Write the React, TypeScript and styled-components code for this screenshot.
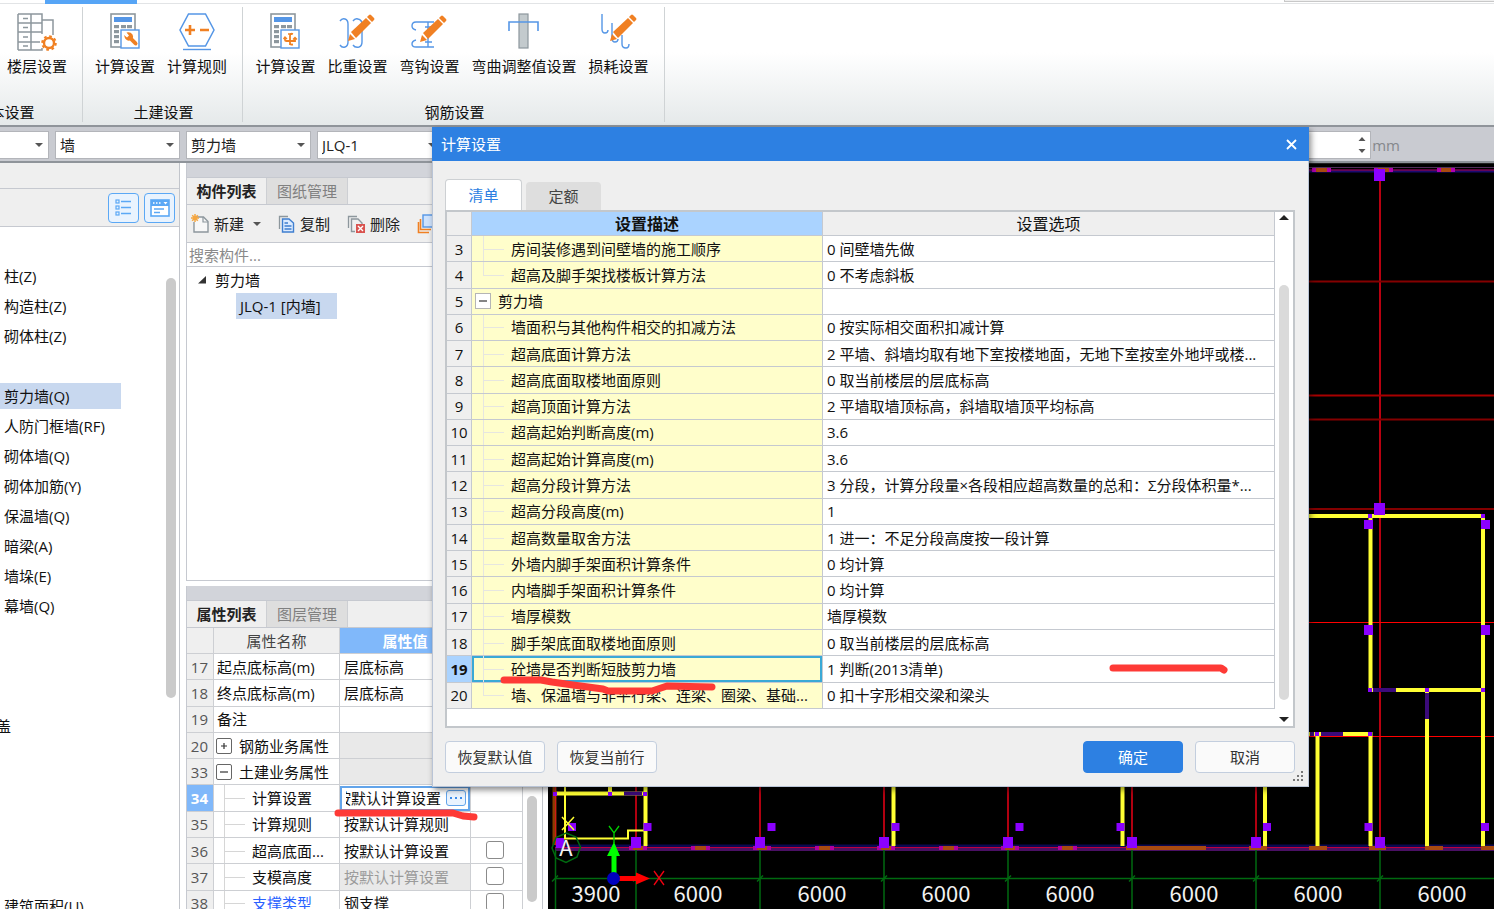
import React from "react";
import styled, { createGlobalStyle, css } from "styled-components";

const Global = createGlobalStyle`
  *, *::before, *::after { box-sizing: border-box; }
  html, body, #root { height: 100%; }
  body {
    margin: 0;
    overflow: hidden;
    color: #222;
    background: #fff;
    font: 15px/20px "Open Sans", "Noto Sans CJK SC", sans-serif;
  }
  button, input, select { font: inherit; color: inherit; margin: 0; }
  button { padding: 0; border: 0; background: none; white-space: nowrap; }
  ul { list-style: none; margin: 0; padding: 0; }
  svg { display: block; flex: none; }
`;

const Screen = styled.div`
  position: relative;
  display: flex;
  flex-direction: column;
  height: 100vh;
  overflow: hidden;
`;

/* ---------- ribbon ---------- */

const TabStrip = styled.div`
  display: flex;
  height: 4px;
  flex: none;
  padding-left: 45px;
  background: linear-gradient(#fff 3px, #e2e4e6 3px);
`;
const ActiveTabEdge = styled.div`
  width: 92px;
  background: #56a5f6;
`;
const SearchEdge = styled.div`
  width: 210px;
  height: 2px;
  margin-left: auto;
  background: #efefef;
  border-left: 1px solid #c8c8c8;
  border-bottom: 1px solid #c8c8c8;
`;
const Ribbon = styled.header`
  display: flex;
  height: 123px;
  flex: none;
  padding: 3px 0 3px;
  background: linear-gradient(#fff 40%, #e5e9ea);
  border-bottom: 2px solid #8f949a;
`;
const RibbonGroup = styled.section<{ $width: number; $cut?: boolean }>`
  display: flex;
  flex-direction: column;
  align-items: ${(p) => (p.$cut ? "flex-end" : "center")};
  flex: none;
  width: ${(p) => p.$width}px;
  margin-left: ${(p) => (p.$cut ? "-74px" : "0")};
  padding-right: ${(p) => (p.$cut ? "15px" : "0")};
  border-right: 1px solid #cfd3d5;
`;
const RibbonItems = styled.div`
  display: flex;
  gap: 12px;
  flex: 1;
  align-items: flex-start;
  padding-right: 3px;
  ${RibbonGroup}:first-child & { padding-right: 0; }
`;
const RibbonButton = styled.button`
  display: flex;
  flex-direction: column;
  align-items: center;
  gap: 4px;
  padding-top: 5px;
  color: #111;
`;
const GroupTitle = styled.div<{ $cut?: boolean }>`
  padding-left: 2px;
  color: #111;
  ${(p) => p.$cut && css`align-self: center; padding-left: 16px;`}
`;

/* ---------- selection bar ---------- */

const SelectBar = styled.div`
  display: flex;
  align-items: center;
  gap: 6px;
  height: 36px;
  flex: none;
  padding: 2px 94px 0 0;
  background: #c9cbd1;
  border-bottom: 2px solid #8f949a;
`;
const Combo = styled.label`
  position: relative;
  flex: none;
  width: 125px;
  &:first-child { margin-left: -76px; }
  &::after {
    content: "";
    position: absolute;
    right: 6px;
    top: 12px;
    border: 4px solid transparent;
    border-top-color: #555;
    border-bottom: 0;
  }
`;
const ComboSelect = styled.select`
  appearance: none;
  width: 100%;
  height: 28px;
  padding: 0 20px 0 4px;
  border: 1px solid #b3b5ba;
  border-radius: 0;
  background: #fff;
`;
const Spinner = styled.label`
  display: flex;
  align-items: center;
  margin-left: auto;
  color: #85888c;
`;
const SpinBox = styled.span`
  display: flex;
  align-items: center;
  height: 28px;
  margin-right: 1px;
  padding-right: 4px;
  border: 1px solid #b3b5ba;
  background: #fff;
`;
const SpinInput = styled.input`
  width: 108px;
  border: 0;
  background: transparent;
`;

/* ---------- workspace ---------- */

const Workspace = styled.main`
  display: flex;
  flex: 1;
  min-height: 0;
`;
const NavPane = styled.nav`
  display: flex;
  flex-direction: column;
  flex: none;
  width: 180px;
  border-right: 1px solid #c2c5cb;
  background: #fff;
`;
const NavHeading = styled.div`
  height: 26px;
  flex: none;
  background: #efefef;
  border-bottom: 1px solid #c6c9d0;
`;
const NavTools = styled.div`
  display: flex;
  justify-content: flex-end;
  align-items: center;
  gap: 5px;
  height: 38px;
  flex: none;
  padding-right: 4px;
  background: #efefef;
  border-bottom: 1px solid #c6c9d0;
`;
const ViewButton = styled.button`
  display: grid;
  place-items: center;
  width: 31px;
  height: 30px;
  border: 1px solid #5ba8f5;
  border-radius: 4px;
  background: #e9f3fe;
`;
const NavBody = styled.div`
  display: flex;
  flex: 1;
  min-height: 0;
  overflow: hidden;
`;
const NavList = styled.ul`
  flex: 1;
  padding-top: 34px;
`;
const NavItem = styled.li<{ $selected?: boolean; $cut?: boolean }>`
  height: 26px;
  width: 121px;
  margin: 2px 0 4px;
  padding: 3px 0 3px 4px;
  color: #111;
  white-space: nowrap;
  background: ${(p) => (p.$selected ? "#c8d8ef" : "transparent")};
  ${(p) => p.$cut && css`margin-left: -8px;`}
`;
const NavThumb = styled.div`
  width: 10px;
  height: 420px;
  margin: 51px 3px 0 0;
  border-radius: 5px;
  background: #cacaca;
`;

const SidePane = styled.aside`
  display: flex;
  flex-direction: column;
  gap: 5px;
  flex: none;
  width: 357px;
  margin: 0 5px 0 6px;
  border-right: 1px solid #c2c5cb;
`;
const Panel = styled.section<{ $grow?: boolean }>`
  display: flex;
  flex-direction: column;
  flex: none;
  min-height: 0;
  border-left: 1px solid #c6c9d0;
  border-bottom: 1px solid #c6c9d0;
  background: #fff;
  ${(p) => (p.$grow ? css`flex: 1; border-bottom: 0;` : css`height: 418px;`)}
`;
const PanelGrip = styled.div`
  height: 15px;
  flex: none;
  background: #d2d4da;
  border-bottom: 1px solid #c6c9d0;
`;
const PanelTabs = styled.div`
  display: flex;
  height: 27px;
  flex: none;
  background: #efefef;
  border-bottom: 1px solid #c6c9d0;
`;
const PanelTab = styled.button<{ $active?: boolean }>`
  width: ${(p) => (p.$active ? 80 : 81)}px;
  border-right: 1px solid #cdcfd3;
  background: ${(p) => (p.$active ? "#efefef" : "#dedede")};
  color: ${(p) => (p.$active ? "#222" : "#808080")};
  font-weight: ${(p) => (p.$active ? 700 : 400)};
`;
const PanelTools = styled.div`
  display: flex;
  align-items: center;
  gap: 17px;
  height: 38px;
  flex: none;
  padding-left: 4px;
  overflow: hidden;
  background: #efefef;
  border-bottom: 1px solid #c6c9d0;
`;
const ToolButton = styled.button`
  display: flex;
  align-items: center;
  gap: 5px;
`;
const Caret = styled.span`
  margin-left: 4px;
  border: 4px solid transparent;
  border-top-color: #555;
  border-bottom: 0;
`;
const SearchInput = styled.input`
  height: 24px;
  flex: none;
  padding: 0 2px;
  border: 0;
  border-bottom: 1px solid #c6c9d0;
  background: #fff;
  &::placeholder { color: #8a8a8a; opacity: 1; }
`;
const Tree = styled.ul`
  color: #111;
`;
const TreeBranch = styled.li`
  display: flex;
  align-items: center;
  gap: 8px;
  height: 26px;
  padding-left: 11px;
`;
const TreeLeaf = styled.li`
  width: 101px;
  height: 26px;
  margin-left: 49px;
  padding: 3px 4px;
  background: #c8d8ef;
  white-space: nowrap;
`;

/* ---------- property grid ---------- */

const PropertyBody = styled.div`
  display: flex;
  flex: 1;
  min-height: 0;
  overflow: hidden;
`;
const PropertyTable = styled.table`
  table-layout: fixed;
  flex: none;
  width: 336px;
  height: 289px;
  border-collapse: separate;
  border-spacing: 0;
  th, td {
    padding: 0 0 0 4px;
    border-right: 1px solid #cdcfd3;
    border-bottom: 1px solid #cdcfd3;
    text-align: left;
    font-weight: 400;
    white-space: nowrap;
    overflow: hidden;
    color: #111;
  }
  thead th {
    height: 26px;
    padding: 0;
    text-align: center;
    background: #efefef;
    color: #444;
  }
`;
const ValueHead = styled.th`
  && { background: #80b8fa; color: #fff; font-weight: 700; }
`;
const RowNumber = styled.th<{ $current?: boolean }>`
  && {
    padding: 0 5px 0 0;
    text-align: right;
    background: ${(p) => (p.$current ? "#80b8fa" : "#efefef")};
    color: ${(p) => (p.$current ? "#fff" : "#555")};
    font-weight: ${(p) => (p.$current ? 700 : 400)};
  }
`;
const PropertyName = styled.td<{ $linked?: boolean; $kind: string }>`
  && {
    padding-left: ${(p) => (p.$kind === "plain" ? 3 : 2)}px;
    ${(p) => p.$linked && css`color: #2a62ff;`}
  }
`;
const NameLine = styled.span`
  display: flex;
  align-items: center;
  gap: 7px;
  height: 25px;
`;
const Toggle = styled.button<{ $soft?: boolean }>`
  display: grid;
  place-items: center;
  width: 16px;
  height: 16px;
  flex: none;
  border: 1px solid ${(p) => (p.$soft ? "#b5b5b5" : "#666")};
  border-radius: ${(p) => (p.$soft ? 0 : 2)}px;
  background: #fff;
`;
const Twig = styled.span<{ $last?: boolean; $pale?: boolean }>`
  position: relative;
  align-self: stretch;
  width: 21px;
  margin-left: 8px;
  flex: none;
  &::before {
    content: "";
    position: absolute;
    left: 0;
    top: -1px;
    bottom: ${(p) => (p.$last ? "50%" : "-2px")};
    border-left: 1px solid ${(p) => (p.$pale ? "#e6e6e0" : "#d6d6d6")};
  }
  &::after {
    content: "";
    position: absolute;
    left: 0;
    right: 0;
    top: 50%;
    border-top: 1px solid ${(p) => (p.$pale ? "#e6e6e0" : "#d6d6d6")};
  }
`;
const PropertyValue = styled.td<{ $shade?: boolean; $muted?: boolean }>`
  && {
    background: ${(p) => (p.$shade ? "#e9e9e9" : "#fff")};
    ${(p) => p.$muted && css`color: #9b9b9b;`}
  }
`;
const EditingValue = styled.td`
  && { padding: 0; }
`;
const EditFrame = styled.span`
  display: flex;
  align-items: center;
  gap: 5px;
  height: 25px;
  padding: 0 2px 0 4px;
  border: 2px solid #62a4ea;
`;
const EditText = styled.span`
  display: flex;
  justify-content: flex-end;
  flex: 1;
  min-width: 0;
  overflow: hidden;
`;
const MoreButton = styled.button`
  display: grid;
  place-items: center;
  width: 20px;
  height: 16px;
  flex: none;
  border: 1px solid #62a4ea;
  border-radius: 3px;
  background: #e9f3fe;
`;
const CheckCell = styled.td`
  && { padding: 0; }
`;
const CheckBox = styled.input`
  appearance: none;
  display: block;
  width: 18px;
  height: 18px;
  margin: 0 0 2px 15px;
  border: 1px solid #8b8b8b;
  border-radius: 3px;
  background: #fff;
`;
const PropertyThumb = styled.div`
  width: 10px;
  height: 106px;
  margin: 168px 0 0 4px;
  border-radius: 5px;
  background: #cacaca;
`;

/* ---------- drawing canvas ---------- */

const Canvas = styled.div`
  flex: 1;
  min-width: 0;
  border-top: 1px solid #222;
  background: #000;
  svg { width: 100%; height: 100%; }
`;

/* ---------- dialog ---------- */

const Dialog = styled.section`
  position: absolute;
  left: 432px;
  top: 127px;
  width: 877px;
  border: 1px solid #b9c4d6;
  border-top: 0;
  background: #efefef;
  box-shadow: 2px 3px 6px rgba(0, 0, 0, 0.45);
`;
const TitleBar = styled.header`
  display: flex;
  align-items: center;
  justify-content: space-between;
  height: 34px;
  margin: 0 -1px;
  padding: 0 12px 0 9px;
  background: #2d80e2;
  color: #fff;
`;
const DialogBody = styled.div`
  padding: 18px 13px 13px 12px;
`;
const DialogTabs = styled.div`
  display: flex;
  align-items: flex-end;
  gap: 4px;
`;
const DialogTab = styled.button<{ $active?: boolean }>`
  width: ${(p) => (p.$active ? 77 : 75)}px;
  height: ${(p) => (p.$active ? 31 : 28)}px;
  border: ${(p) => (p.$active ? "1px solid #cdd0d3" : "0")};
  border-bottom: 0;
  border-radius: 4px 4px 0 0;
  background: ${(p) => (p.$active ? "#fff" : "#dedede")};
  color: ${(p) => (p.$active ? "#2d80e2" : "#444")};
`;
const TableFrame = styled.div`
  display: flex;
  height: 518px;
  border: 2px solid #c3c7cb;
  background: #fff;
`;
const SettingsTable = styled.table`
  table-layout: fixed;
  flex: 1;
  height: 497px;
  border-collapse: separate;
  border-spacing: 0;
  color: #111;
  th, td {
    padding: 0 4px;
    border-right: 1px solid #c5c9d0;
    border-bottom: 1px solid #c5c9d0;
    text-align: left;
    font-weight: 400;
    white-space: nowrap;
    overflow: hidden;
  }
  thead th {
    height: 24px;
    padding: 0;
    text-align: center;
    font-size: 16px;
    background: #efefef;
  }
`;
const DescHead = styled.th`
  && { background: #aad3ff; font-weight: 700; }
`;
const SettingNumber = styled.th<{ $current?: boolean }>`
  && {
    padding: 0;
    text-align: center;
    background: ${(p) => (p.$current ? "#aad3ff" : "#efefef")};
    font-weight: ${(p) => (p.$current ? 700 : 400)};
  }
`;
const SettingName = styled.td<{ $current?: boolean }>`
  && {
    padding: 0 0 0 3px;
    background: #fffecb;
    box-shadow: ${(p) => (p.$current ? "inset 0 0 0 2px #3aa9d6" : "none")};
  }
`;
const DialogScroll = styled.div`
  display: flex;
  flex-direction: column;
  align-items: center;
  justify-content: space-between;
  width: 18px;
  flex: none;
  padding: 3px 0 4px;
`;
const DialogThumb = styled.div`
  flex: 1;
  width: 10px;
  margin: 65px 0 17px;
  border-radius: 5px;
  background: #dadada;
`;
const ScrollArrow = styled.span<{ $down?: boolean }>`
  border: 5px solid transparent;
  ${(p) =>
    p.$down
      ? css`border-top-color: #222; border-bottom: 0;`
      : css`border-bottom-color: #222; border-top: 0;`}
`;
const DialogFooter = styled.footer`
  display: flex;
  gap: 12px;
  padding-top: 13px;
`;
const DialogButton = styled.button<{ $primary?: boolean }>`
  width: 100px;
  height: 32px;
  border: 1px solid ${(p) => (p.$primary ? "#2d80e2" : "#c3cede")};
  border-radius: 4px;
  background: ${(p) => (p.$primary ? "#2d80e2" : "#fafafa")};
  color: ${(p) => (p.$primary ? "#fff" : "#333")};
  &:nth-child(3) { margin-left: auto; }
`;
const ResizeGrip = styled.svg`
  position: absolute;
  right: 4px;
  bottom: 4px;
`;
const Markup = styled.svg`
  position: absolute;
  inset: 0;
  width: 100%;
  height: 100%;
  pointer-events: none;
`;

/* ---------- icons ---------- */

const BLUE = "#5596e6";
const ORANGE = "#f08023";
const GREY = "#8d979d";

const Pencil = ({ x = 0, y = 0 }: { x?: number; y?: number }) => (
  <g transform={`translate(${x} ${y})`} fill={ORANGE}>
    <path d="M0 27 L2 20 L7 25 Z" />
    <path d="M3 18 L18 4 L23 9 L8 24 Z" />
    <path d="M19 3 L21 1 Q22 0 23 1 L26 4 Q27 5 26 6 L24 8 Z" />
  </g>
);

const FloorIcon = () => (
  <svg width="42" height="40" viewBox="0 0 42 40" fill="none" stroke={GREY} strokeWidth="1.5">
    <path d="M2 2 H26 V22 M2 38 H26 V36 M2 2 V38 M15 2 V38 M2 11 H26 M2 20 H26 M2 30 H24 M26 8 H37 V23" />
    <path d="M7 6.500 H12 M7 15.500 H12 M7 25 H12 M7 34 H12" />
    <circle cx="33" cy="31" r="5" stroke={ORANGE} strokeWidth="2.400" fill="#fff" />
    <circle cx="33" cy="31" r="6.800" stroke={ORANGE} strokeWidth="2" strokeDasharray="2.670 2.670" />
  </svg>
);

const CalcBase = () => (
  <>
    <rect x="2" y="2" width="24" height="33" fill="#fff" stroke={GREY} strokeWidth="1.600" />
    <rect x="5" y="5" width="18" height="5" fill={BLUE} />
    <g fill={GREY}>
      {[13, 18, 23, 28].map((y) =>
        [5, 12, 18].map((x) => <rect key={`${x}-${y}`} x={x} y={y} width="5" height="3.200" />)
      )}
    </g>
    <rect x="12" y="18" width="18" height="18" fill="#fff" stroke={BLUE} strokeWidth="1.400" />
  </>
);

const CalcWrenchIcon = () => (
  <svg width="32" height="40" viewBox="0 0 32 40" fill="none">
    <CalcBase />
    <path
      d="M15 23 l3 2.500 l2 -2 l-2.500 -3 q4 -1 6 2 q1 2 .4 3.500 l4 4 q1.500 2 0 3 q-1.200 1.200 -3 -.4 l-4 -4 q-4.500 1 -5.900 -5.600Z"
      fill={ORANGE}
    />
  </svg>
);

const CalcBarIcon = () => (
  <svg width="32" height="40" viewBox="0 0 32 40" fill="none">
    <CalcBase />
    <g stroke={ORANGE} strokeWidth="1.800">
      <path d="M24 22 q-3 -1 -3 2 V33 M16 25 V28 Q16 29 17.500 29 H26 V26 M21 29 V31 Q21 33 24 32.500" />
      <path d="M19 22 h4 M14.500 27 l1.500 -2 l2 2 M24 27.500 l2 -2 l2 2" strokeWidth="1.300" />
    </g>
  </svg>
);

const RuleIcon = () => (
  <svg width="38" height="40" viewBox="0 0 38 40" fill="none">
    <path d="M10.500 2 H27.500 L36 18 L27.500 34 H10.500 L2 18 Z" fill="#fff" stroke={BLUE} strokeWidth="1.500" />
    <path d="M5 37.500 H33" stroke={BLUE} strokeWidth="1.400" />
    <path d="M7 18 H17 M12 13 V23 M22 18 H31" stroke={ORANGE} strokeWidth="2.600" />
  </svg>
);

const WeightIcon = () => (
  <svg width="38" height="40" viewBox="0 0 38 40" fill="none">
    <g stroke={BLUE} strokeWidth="1.400">
      <path d="M2 9 Q4 6 7 7 Q10 8 10 12 V30 Q10 34 7 35 Q4 36 2 33" />
      <path d="M15 9 Q17 6 20 7 Q24 8 24 12 V30 Q24 34 21 35 Q17 36 15 33" />
    </g>
    <Pencil x={10} y={2} />
  </svg>
);

const HookIcon = () => (
  <svg width="38" height="40" viewBox="0 0 38 40" fill="none">
    <g stroke={BLUE} strokeWidth="1.400">
      <path d="M6 18 Q2 17 2 14 Q2 10 6 10 H24 M6 28 Q2 29 2 32 Q2 35 6 35 H24 M18 10 V35 M15 30 H22 M15 15 H22" />
    </g>
    <Pencil x={10} y={3} />
  </svg>
);

const BendIcon = () => (
  <svg width="34" height="40" viewBox="0 0 34 40" fill="none">
    <rect x="12" y="2" width="9" height="34" fill="#c3cacd" stroke={GREY} strokeWidth="1.200" />
    <path d="M2 19 V10 H31 V19" stroke={BLUE} strokeWidth="1.600" />
  </svg>
);

const LossIcon = () => (
  <svg width="38" height="40" viewBox="0 0 38 40" fill="none">
    <path
      d="M2 2 V17 Q2 21 5 21 Q8 21 8 18 M12 11 V26 Q12 30 15 30 Q18 30 18 27 M22 23 V32 Q22 36 26 36 Q29 36 29 32"
      stroke={BLUE}
      strokeWidth="1.400"
    />
    <Pencil x={10} y={2} />
  </svg>
);

const ListViewIcon = () => (
  <svg width="18" height="18" viewBox="0 0 18 18" fill="none" stroke="#5ba8f5" strokeWidth="1.200">
    {[1, 7, 13].map((y) => (
      <g key={y}>
        <rect x="1" y={y} width="3" height="3" />
        <path d={`M6 ${y + 1.5} H16`} strokeWidth="1.500" />
      </g>
    ))}
  </svg>
);

const CardViewIcon = () => (
  <svg width="20" height="18" viewBox="0 0 20 18" fill="none">
    <rect x="1" y="1" width="18" height="16" fill="#fff" stroke="#5ba8f5" strokeWidth="1.600" />
    <rect x="1" y="1" width="18" height="6" fill="#5ba8f5" />
    <path d="M3 4 h1.500 M6 4 h1.500 M9 4 h1.500" stroke="#fff" strokeWidth="1.500" />
    <path d="M13.500 3 h4 l-2 2.500Z" fill="#fff" />
    <path d="M4 10 H14 M4 13.500 H10" stroke="#5ba8f5" strokeWidth="1.400" />
  </svg>
);

const NewIcon = () => (
  <svg width="18" height="19" viewBox="0 0 18 19" fill="none">
    <path d="M4 3 H12.500 L17 7.500 V18 H3 V8" fill="#f7f7f7" stroke={GREY} strokeWidth="1.400" />
    <path d="M12 3 V8 H17" stroke={GREY} strokeWidth="1.200" />
    <path d="M4 0 V8 M0 4 H8 M1.200 1.200 L6.800 6.800 M6.800 1.200 L1.200 6.800" stroke="#f5a640" strokeWidth="1.500" />
  </svg>
);

const CopyIcon = () => (
  <svg width="17" height="18" viewBox="0 0 17 18" fill="none">
    <path d="M1.500 14 V1.500 H10" stroke={GREY} strokeWidth="1.300" />
    <path d="M4.500 4 H11 L15.500 8 V17 H4.500 Z" fill="#dcebff" stroke="#3f7fd0" strokeWidth="1.400" />
    <path d="M6.500 8 H10 M6.500 11 H13.500 M6.500 14 H13.500" stroke="#3f7fd0" strokeWidth="1.300" />
  </svg>
);

const DeleteIcon = () => (
  <svg width="18" height="18" viewBox="0 0 18 18" fill="none">
    <path d="M1.500 13 V1.500 H10" stroke={GREY} strokeWidth="1.300" />
    <path d="M8 16.500 H4.500 V4 H11 L15 8 V9" stroke={GREY} strokeWidth="1.400" />
    <rect x="9" y="9" width="9" height="9" fill="#d9534f" />
    <path d="M11 11 L16 16 M16 11 L11 16" stroke="#fff" strokeWidth="1.400" />
  </svg>
);

const LayersIcon = () => (
  <svg width="20" height="20" viewBox="0 0 20 20" fill="none">
    <path d="M1.500 8 V18.500 H12" stroke={ORANGE} strokeWidth="1.600" />
    <path d="M3.500 5 V15.500 H14" stroke={ORANGE} strokeWidth="1.600" />
    <rect x="6" y="1" width="12" height="12" fill="#cfe3fd" stroke={BLUE} strokeWidth="1.400" />
  </svg>
);

/* ---------- data ---------- */

const NAV = [
  "柱(Z)", "构造柱(Z)", "砌体柱(Z)", "", "剪力墙(Q)", "人防门框墙(RF)", "砌体墙(Q)", "砌体加筋(Y)",
  "保温墙(Q)", "暗梁(A)", "墙垛(E)", "幕墙(Q)", "", "", "", "盖", "", "", "", "", "", "建筑面积(U)",
];

type Prop = {
  no: number;
  name: string;
  value?: string;
  kind: "plain" | "open" | "closed" | "child";
  check?: boolean;
  muted?: boolean;
  linked?: boolean;
  editing?: boolean;
};

const PROPS: Prop[] = [
  { no: 17, name: "起点底标高(m)", value: "层底标高", kind: "plain" },
  { no: 18, name: "终点底标高(m)", value: "层底标高", kind: "plain" },
  { no: 19, name: "备注", kind: "plain" },
  { no: 20, name: "钢筋业务属性", kind: "closed" },
  { no: 33, name: "土建业务属性", kind: "open" },
  { no: 34, name: "计算设置", value: "按默认计算设置", kind: "child", editing: true },
  { no: 35, name: "计算规则", value: "按默认计算规则", kind: "child" },
  { no: 36, name: "超高底面...", value: "按默认计算设置", kind: "child", check: true },
  { no: 37, name: "支模高度", value: "按默认计算设置", kind: "child", check: true, muted: true },
  { no: 38, name: "支撑类型", value: "钢支撑", kind: "child", check: true, linked: true },
];

const SETTINGS: [number, string, string][] = [
  [3, "房间装修遇到间壁墙的施工顺序", "0 间壁墙先做"],
  [4, "超高及脚手架找楼板计算方法", "0 不考虑斜板"],
  [5, "剪力墙", ""],
  [6, "墙面积与其他构件相交的扣减方法", "0 按实际相交面积扣减计算"],
  [7, "超高底面计算方法", "2 平墙、斜墙均取有地下室按楼地面，无地下室按室外地坪或楼..."],
  [8, "超高底面取楼地面原则", "0 取当前楼层的层底标高"],
  [9, "超高顶面计算方法", "2 平墙取墙顶标高，斜墙取墙顶平均标高"],
  [10, "超高起始判断高度(m)", "3.6"],
  [11, "超高起始计算高度(m)", "3.6"],
  [12, "超高分段计算方法", "3 分段，计算分段量×各段相应超高数量的总和：Σ分段体积量*..."],
  [13, "超高分段高度(m)", "1"],
  [14, "超高数量取舍方法", "1 进一：不足分段高度按一段计算"],
  [15, "外墙内脚手架面积计算条件", "0 均计算"],
  [16, "内墙脚手架面积计算条件", "0 均计算"],
  [17, "墙厚模数", "墙厚模数"],
  [18, "脚手架底面取楼地面原则", "0 取当前楼层的层底标高"],
  [19, "砼墙是否判断短肢剪力墙", "1 判断(2013清单)"],
  [20, "墙、保温墙与非平行梁、连梁、圈梁、基础...", "0 扣十字形相交梁和梁头"],
];

const AXES = [636, 760, 884, 1008, 1132, 1256, 1380];
const YELLOW = "#ffff33";
const PURPLE = "#8b00ff";
const DIM = "#3b0a7a";

const Plan = () => (
  <svg viewBox="548 164 946 745" preserveAspectRatio="xMinYMin slice" fill="none">
    {/* grid axes */}
    <g stroke="#b00010" strokeWidth="2">
      {AXES.slice(0, 6).map((x) => <path key={x} d={`M${x} 700 V846`} />)}
      <path d="M1380 168 V846" stroke="#b80010" />
      <path d="M1300 281.500 H1494 M1300 419.500 H1494 M1300 509 H1494" stroke="#840000" />
      <path d="M1300 395.500 H1494" stroke="#a80000" />
      <path d="M1300 622.500 H1494 M1300 736.500 H1494" stroke="#f00" strokeWidth="1" />
    </g>
    {/* outer walls */}
    <path d="M1300 167.500 H1494" stroke="#50305a" />
    <path d="M1300 171 H1494" stroke="#1a0a70" strokeWidth="3" />
    <path d="M1300 170 H1494" stroke="#b0003c" />
    <path d="M555 846 H1494" stroke="#0c0850" strokeWidth="3" />
    <path d="M555 849.500 H1494" stroke="#4a1064" strokeWidth="3" />
    <path d="M555 847.500 H1494" stroke="#c0003c" />
    {[[1312, 19], [1374, 19], [1437, 18]].map(([x, w]) => (
      <g key={x}>
        <rect x={x} y="168" width={w} height="4" fill="#b000b0" />
        <rect x={x + 4} y="168" width={w - 8} height="4" fill="#a84a10" />
      </g>
    ))}
    {[[629, 18], [691, 19], [753, 18], [815, 19], [877, 18], [939, 19], [1001, 18], [1058, 19]].map(([x, w]) => (
      <g key={x}>
        <rect x={x} y="846" width={w} height="4" fill="#b000a0" />
        <rect x={x + 4} y="846" width={w - 8} height="4" fill="#a84a10" />
      </g>
    ))}
    <path d="M1126 848 H1206 M1249 848 H1267 M1309 848 H1327 M1369 848 H1386 M1425 848 H1443 M1481 848 H1494" stroke="#a84a10" strokeWidth="4" />
    {/* partition walls */}
    <g stroke={YELLOW} strokeWidth="4">
      <path d="M1300 516 H1483 M1370.500 516 V690 M1483 516 V846 M1370.500 690 H1483 M1427 690 V846" />
      <path d="M1300 734 H1370.500 V846 M1317.500 734 V846 M1265 700 V846 M1122.500 700 V846 M893.500 700 V846 M645.500 700 V846" />
      <path d="M556 793.500 H645 M610 780 V794" />
      <path d="M565 780 V838.500 H628 V830.500 H644" strokeWidth="2" />
    </g>
    <g stroke={DIM} strokeWidth="4">
      <path d="M1373 690 H1396 M1427 693 V719 M1310 734 H1314 M1321 734 H1343 M624 793.500 H642" />
    </g>
    <path d="M554.500 780 V845" stroke="#8a3c00" strokeWidth="4" />
    <path d="M555.500 780 V845" stroke="#d01818" />
    {/* columns */}
    <g fill={PURPLE}>
      {AXES.map((x) => <rect key={x} x={x - 5} y="837" width="10" height="11" />)}
      <rect x="556" y="838" width="8" height="10" />
      {[572, 647.5, 771.5, 895.5, 1019.5, 1120.5, 1267, 1368.5, 1485].map((x) => (
        <rect key={x} x={x - 4} y="823" width="8" height="8" />
      ))}
      <rect x="1374" y="169" width="11" height="12" />
      <rect x="1374" y="503" width="11" height="12" />
      {[1364, 1481].map((x) => (
        <g key={x}>
          <rect x={x} y="520" width="9" height="9" />
          <rect x={x} y="625" width="9" height="10" />
        </g>
      ))}
      {[[1368, 514], [1481, 514], [1368, 688], [1425, 688], [1481, 688], [1315, 732], [1368, 732], [553, 792], [608, 792], [643, 792]].map(([x, y]) => (
        <rect key={`${x}-${y}`} x={x} y={y} width="4" height="4" />
      ))}
    </g>
    {/* dimension lines */}
    <g stroke="#006a10" strokeWidth="1.500">
      <path d="M555 878.500 H1494 M555.500 850 V909" />
      {AXES.map((x) => <path key={x} d={`M${x} 850 V909`} />)}
      {[555, ...AXES].map((x) => <path key={x} d={`M${x - 3} 881.500 L${x + 3} 875.500`} />)}
      <path d="M566 833 L576 837 L580.500 847 L577 857 L566 862.500 L556 858 L552 848 L556 837.500 Z" />
    </g>
    <g fill="#f2f2f2" fontFamily='"Noto Sans CJK SC", sans-serif' fontSize="22" textAnchor="middle">
      <text x="596" y="902">3900</text>
      {[698, 822, 946, 1070, 1194, 1318, 1442].map((x) => <text key={x} x={x} y="902">6000</text>)}
      <text x="566" y="856">A</text>
    </g>
    {/* coordinate marker */}
    <path d="M562 817 L574 830 M574 817 L562 830" stroke={YELLOW} strokeWidth="1.500" />
    <path d="M609 826 L614 833 L619 826 M614 833 V843" stroke="#00d000" strokeWidth="1.300" />
    <path d="M614 842 L620 856 H616.500 V873 H611.500 V856 H607 Z" fill="#0f0" />
    <path d="M650 878.500 L636 872.500 V876 H619 V881 H636 V884.500 Z" fill="#f00" />
    <circle cx="613.500" cy="878.500" r="6.500" fill="#0000c0" />
    <path d="M654 871 L664 885 M664 871 L654 885" stroke="#f00010" strokeWidth="1.300" />
  </svg>
);

const RIBBON_REBAR: [string, React.ReactNode][] = [
  ["计算设置", <CalcBarIcon key="i" />],
  ["比重设置", <WeightIcon key="i" />],
  ["弯钩设置", <HookIcon key="i" />],
  ["弯曲调整值设置", <BendIcon key="i" />],
  ["损耗设置", <LossIcon key="i" />],
];

const ToggleSign = ({ open }: { open: boolean }) => (
  <svg width="10" height="10" viewBox="0 0 10 10" stroke="#333" strokeWidth="1.200">
    <path d={open ? "M1 5 H9" : "M2 5 H8 M5 2 V8"} />
  </svg>
);

const PropertyRow = ({ row }: { row: Prop }) => {
  const group = row.kind === "open" || row.kind === "closed";
  return (
    <tr>
      <RowNumber scope="row" $current={row.editing}>{row.no}</RowNumber>
      <PropertyName $kind={row.kind} $linked={row.linked}>
        <NameLine>
          {group && (
            <Toggle aria-label={row.name}>
              <ToggleSign open={row.kind === "open"} />
            </Toggle>
          )}
          {row.kind === "child" && <Twig />}
          {row.name}
        </NameLine>
      </PropertyName>
      {row.editing ? (
        <EditingValue>
          <EditFrame>
            <EditText><span>{row.value}</span></EditText>
            <MoreButton aria-label="更多">
              <svg width="12" height="4" viewBox="0 0 12 4" fill="#3a8ae8">
                <rect x="0" y="1" width="2" height="2" />
                <rect x="5" y="1" width="2" height="2" />
                <rect x="10" y="1" width="2" height="2" />
              </svg>
            </MoreButton>
          </EditFrame>
        </EditingValue>
      ) : (
        <PropertyValue $shade={group || row.muted} $muted={row.muted}>{row.value}</PropertyValue>
      )}
      <CheckCell>{row.check && <CheckBox type="checkbox" aria-label={row.name} />}</CheckCell>
    </tr>
  );
};

export default function App() {
  return (
    <>
      <Global />
      <Screen>
        <TabStrip><ActiveTabEdge /><SearchEdge /></TabStrip>
        <Ribbon>
          <RibbonGroup $width={157} $cut>
            <RibbonItems>
              <RibbonButton><FloorIcon />楼层设置</RibbonButton>
            </RibbonItems>
            <GroupTitle $cut>基本设置</GroupTitle>
          </RibbonGroup>
          <RibbonGroup $width={160}>
            <RibbonItems>
              <RibbonButton><CalcWrenchIcon />计算设置</RibbonButton>
              <RibbonButton><RuleIcon />计算规则</RibbonButton>
            </RibbonItems>
            <GroupTitle>土建设置</GroupTitle>
          </RibbonGroup>
          <RibbonGroup $width={422}>
            <RibbonItems>
              {RIBBON_REBAR.map(([label, icon]) => (
                <RibbonButton key={label}>{icon}{label}</RibbonButton>
              ))}
            </RibbonItems>
            <GroupTitle>钢筋设置</GroupTitle>
          </RibbonGroup>
        </Ribbon>

        <SelectBar>
          {["", "墙", "剪力墙", "JLQ-1"].map((v) => (
            <Combo key={v}>
              <ComboSelect aria-label={v || "楼层"}><option>{v}</option></ComboSelect>
            </Combo>
          ))}
          <Spinner>
            <SpinBox>
              <SpinInput aria-label="mm" />
              <svg width="8" height="16" viewBox="0 0 8 16" fill="#555">
                <path d="M0.500 4 L4 0 L7.500 4Z M0.500 12 L4 16 L7.500 12Z" />
              </svg>
            </SpinBox>
            mm
          </Spinner>
        </SelectBar>

        <Workspace>
          <NavPane>
            <NavHeading />
            <NavTools>
              <ViewButton aria-label="列表"><ListViewIcon /></ViewButton>
              <ViewButton aria-label="卡片"><CardViewIcon /></ViewButton>
            </NavTools>
            <NavBody>
              <NavList>
                {NAV.map((label, i) => (
                  <NavItem key={i} $selected={label === "剪力墙(Q)"} $cut={label === "盖"}>{label}</NavItem>
                ))}
              </NavList>
              <NavThumb />
            </NavBody>
          </NavPane>

          <SidePane>
            <Panel>
              <PanelGrip />
              <PanelTabs>
                <PanelTab $active>构件列表</PanelTab>
                <PanelTab>图纸管理</PanelTab>
              </PanelTabs>
              <PanelTools>
                <ToolButton><NewIcon />新建<Caret /></ToolButton>
                <ToolButton><CopyIcon />复制</ToolButton>
                <ToolButton><DeleteIcon />删除</ToolButton>
                <ToolButton aria-label="层间复制"><LayersIcon /></ToolButton>
              </PanelTools>
              <SearchInput placeholder="搜索构件..." aria-label="搜索构件" />
              <Tree>
                <TreeBranch>
                  <svg width="9" height="8" viewBox="0 0 9 8"><path d="M8 0 V7.500 H0 Z" fill="#333" /></svg>
                  剪力墙
                </TreeBranch>
                <TreeLeaf>JLQ-1 [内墙]</TreeLeaf>
              </Tree>
            </Panel>

            <Panel $grow>
              <PanelGrip />
              <PanelTabs>
                <PanelTab $active>属性列表</PanelTab>
                <PanelTab>图层管理</PanelTab>
              </PanelTabs>
              <PropertyBody>
                <PropertyTable>
                  <colgroup>
                    <col width="27" /><col width="126" /><col width="131" /><col width="52" />
                  </colgroup>
                  <thead>
                    <tr>
                      <th />
                      <th>属性名称</th>
                      <ValueHead>属性值</ValueHead>
                      <th>附加</th>
                    </tr>
                  </thead>
                  <tbody>
                    {PROPS.map((row) => <PropertyRow key={row.no} row={row} />)}
                  </tbody>
                </PropertyTable>
                <PropertyThumb />
              </PropertyBody>
            </Panel>
          </SidePane>

          <Canvas><Plan /></Canvas>
        </Workspace>

        <Dialog role="dialog" aria-label="计算设置">
          <TitleBar>
            计算设置
            <button aria-label="关闭">
              <svg width="11" height="11" viewBox="0 0 11 11" stroke="#fff" strokeWidth="1.800">
                <path d="M1 1 L10 10 M10 1 L1 10" />
              </svg>
            </button>
          </TitleBar>
          <DialogBody>
            <DialogTabs>
              <DialogTab $active>清单</DialogTab>
              <DialogTab>定额</DialogTab>
            </DialogTabs>
            <TableFrame>
              <SettingsTable>
                <colgroup>
                  <col width="25" /><col width="351" /><col />
                </colgroup>
                <thead>
                  <tr>
                    <th />
                    <DescHead>设置描述</DescHead>
                    <th>设置选项</th>
                  </tr>
                </thead>
                <tbody>
                  {SETTINGS.map(([no, name, option]) => (
                    <tr key={no}>
                      <SettingNumber scope="row" $current={no === 19}>{no}</SettingNumber>
                      <SettingName $current={no === 19}>
                        <NameLine>
                          {no === 5 ? (
                            <Toggle $soft aria-label={name}><ToggleSign open /></Toggle>
                          ) : (
                            <Twig $pale $last={no === 4 || no === 20} />
                          )}
                          {name}
                        </NameLine>
                      </SettingName>
                      <td>{option}</td>
                    </tr>
                  ))}
                </tbody>
              </SettingsTable>
              <DialogScroll>
                <ScrollArrow />
                <DialogThumb />
                <ScrollArrow $down />
              </DialogScroll>
            </TableFrame>
            <DialogFooter>
              <DialogButton>恢复默认值</DialogButton>
              <DialogButton>恢复当前行</DialogButton>
              <DialogButton $primary>确定</DialogButton>
              <DialogButton>取消</DialogButton>
            </DialogFooter>
          </DialogBody>
          <ResizeGrip width="11" height="11" viewBox="0 0 11 11" fill="#777">
            {[[8, 0], [8, 4], [8, 8], [4, 4], [4, 8], [0, 8]].map(([x, y]) => (
              <rect key={`${x}-${y}`} x={x} y={y} width="2" height="2" />
            ))}
          </ResizeGrip>
        </Dialog>

        <Markup fill="none" stroke="#fe3a36" strokeWidth="7" strokeLinecap="round" strokeLinejoin="round">
          <path d="M504 680 H541 L552 682 L573 685 L603 689 L608 691 H652 L667 686 L712 687" />
          <path d="M1113 668 H1221 L1224 670" />
          <path d="M338 813 H453 L463 816 L474 817" />
        </Markup>
      </Screen>
    </>
  );
}
